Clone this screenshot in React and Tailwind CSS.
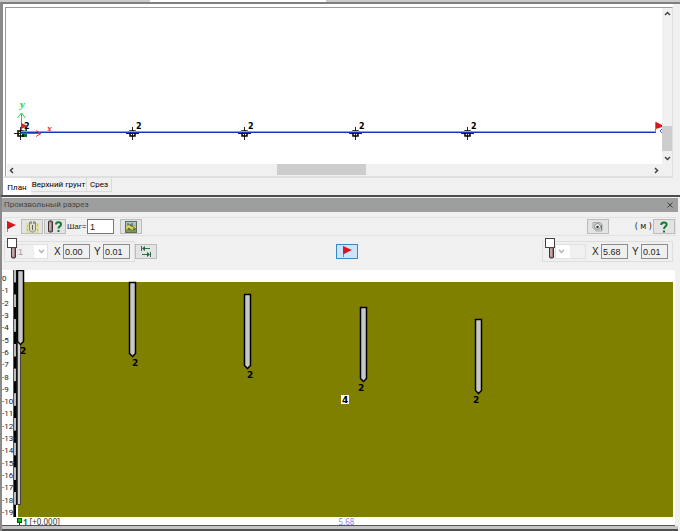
import React from 'react';

const NODES = [125, 237, 348, 460];

const PILES = [
  { x: 10, top: 0, labelX: 13 },
  { x: 122, top: 12, labelX: 125 },
  { x: 237, top: 24, labelX: 240 },
  { x: 353, top: 37, labelX: 351 },
  { x: 468, top: 49, labelX: 466 },
];

const DEPTHS = Array.from({ length: 20 }, (_, i) => i);

function Flag() {
  return (
    <svg width="10" height="11" viewBox="0 0 10 11" aria-hidden="true">
      <path d="M1.5 0v11" stroke="#8f8585" fill="none" />
      <path d="M1 0L10 4L1 8z" fill="#e0141c" />
      <path d="M2 6L9 4L2 8z" fill="#a8262b" />
    </svg>
  );
}

function PileIcon({ question }) {
  return (
    <svg
      width={question ? 15 : 6}
      height="13"
      viewBox={question ? '0 0 15 13' : '0 0 6 13'}
      aria-hidden="true"
    >
      <rect x="0.5" y="1" width="4" height="11" rx="1" fill="#9a7878" stroke="#403030" />
      <path d="M2 2.5v8" stroke="#e8d8d8" />
      {question && (
        <path
          d="M8 4.5C8 1.5 13 1.5 13 4.5C13 6.5 10.5 6.3 10.5 8.5M10.5 10v2"
          fill="none"
          stroke="#137a35"
          strokeWidth="2"
        />
      )}
    </svg>
  );
}

function PitIcon() {
  return (
    <svg width="13" height="12" viewBox="0 0 13 12" aria-hidden="true">
      <path d="M0 2h13v10H0z" fill="#dfdcae" />
      <path d="M3.5 1v8l2 2h2l2-2V1" fill="#dcdcd4" stroke="#85866b" />
      <path d="M5 0v3M8 0v3M6.5 4v5" stroke="#5d6158" />
      <path d="M1 5h1M11 4h1M1 9h1M11 9h1" stroke="#a59d63" />
    </svg>
  );
}

function MapIcon() {
  return (
    <svg width="12" height="12" viewBox="0 0 12 12" aria-hidden="true">
      <rect width="12" height="12" fill="#5c7050" />
      <path d="M1 1h10v3L8 5L5 3L1 5z" fill="#a8c6cf" />
      <path d="M1 5l3-1l3 2l4-2v3L7 9L4 7L1 9z" fill="#d8d052" />
      <path d="M1 9l3-1l3 2l4-2v3H1z" fill="#81965b" />
      <path d="M3 2v2M7 2v3M4 7v2M9 6v3" stroke="#3d5138" />
    </svg>
  );
}

function CameraIcon() {
  return (
    <svg width="12" height="11" viewBox="0 0 12 11" aria-hidden="true">
      <path d="M1 1.5h7l2 1.5v7H4L1 7z" fill="#d5d9d7" stroke="#a5acaa" />
      <circle cx="5.5" cy="5.5" r="3" fill="#eef1ef" stroke="#828a87" />
      <circle cx="5.5" cy="6" r="1.2" fill="#252d2a" />
      <path d="M9.5 4v5" stroke="#6f7774" />
    </svg>
  );
}

function ArrowsIcon() {
  return (
    <svg width="12" height="11" viewBox="0 0 12 11" aria-hidden="true">
      <g fill="none" stroke="#2e7243">
        <path d="M1.5 0v5M3 2.5h7M10.5 6v5M9 8.5H2" />
      </g>
      <path d="M2 2.5l3-2.5v5zM10 8.5l-3-2.5v5z" fill="#1d6a35" />
    </svg>
  );
}

function HelpIcon() {
  return (
    <svg width="8" height="12" viewBox="0 0 8 12" aria-hidden="true">
      <path
        d="M1.2 4C1.2 0.6 6.6 0.6 6.6 3.5C6.6 5.6 4 5.4 4 8M4 9.5v2"
        fill="none"
        stroke="#137a35"
        strokeWidth="2"
      />
    </svg>
  );
}

function Chevron({ d, color = '#444' }) {
  return (
    <svg width="7" height="7" viewBox="0 0 7 7" aria-hidden="true">
      <path d={d} fill="none" stroke={color} strokeWidth="1.5" />
    </svg>
  );
}

const UP = 'M1 5L3.5 2.5L6 5';
const DOWN = 'M1 2L3.5 4.5L6 2';
const LEFT = 'M5 1L2.5 3.5L5 6';
const RIGHT = 'M2 1L4.5 3.5L2 6';

function ToolButton({ label, active, children }) {
  return (
    <button
      type="button"
      aria-label={label}
      className={`flex h-[15px] w-[22px] shrink-0 items-center justify-center border ${
        active ? 'border-[#3d87c5] bg-[#cce4f7]' : 'border-[#bcbcbc] bg-[#e3e3e3]'
      }`}
    >
      {children}
    </button>
  );
}

function Coord({ name, value, id }) {
  return (
    <div className="flex items-center gap-[2px]">
      <label htmlFor={id} className="w-[7px] text-[10px] leading-3">
        {name}
      </label>
      <input
        id={id}
        defaultValue={value}
        className="h-[15px] w-[27px] border border-[#8c8c8c] bg-[#f0f0f0] px-px text-[9px] leading-3 outline-none"
      />
    </div>
  );
}

function PointGroup({ side, pile, x, y }) {
  return (
    <div className="relative flex h-[21px] w-[131px] items-center justify-end gap-[4px] border border-[#dedede] pr-[4px]">
      <input
        type="checkbox"
        aria-label={`${side} point`}
        className="absolute -top-1 left-[2px] size-[10px] appearance-none border border-[#444] bg-white"
      />
      <div className="mr-[2px] flex items-end">
        <PileIcon />
        <div className="relative flex h-[15px] w-[31px] items-center border border-[#e0e0e0] bg-[#fcfcfc]">
          <select
            disabled
            aria-label={`${side} pile`}
            defaultValue={pile}
            className={`h-full w-full appearance-none text-[9px] leading-3 text-[#999] ${
              pile
                ? 'bg-linear-to-r from-[#f0f0f0] from-55% to-white to-55%'
                : 'bg-linear-to-r from-white from-50% to-[#f0f0f0] to-50%'
            }`}
          >
            <option>{pile}</option>
          </select>
          <span className={`pointer-events-none absolute ${pile ? 'right-[2px]' : 'left-[2px]'}`}>
            <Chevron d={DOWN} color="#b0b0b0" />
          </span>
        </div>
      </div>
      <Coord name="X" value={x} id={`${side}-x`} />
      <Coord name="Y" value={y} id={`${side}-y`} />
    </div>
  );
}

function PlanNode({ x }) {
  return (
    <g>
      <path d={`M${x - 6} 125.5h13M${x + 0.5} 119v13`} stroke="#222" />
      <rect x={x - 2} y="123" width="5" height="5" fill="none" stroke="#000" strokeWidth="1.5" />
      <text x={x + 4} y="121" className="text-[8px] font-bold">
        2
      </text>
    </g>
  );
}

function PlanView() {
  return (
    <svg className="block h-[156px] w-full min-w-0 flex-1 bg-white font-['DejaVu_Sans',sans-serif]">
      <svg x="100%" overflow="visible">
        <path d="M-6.5 114v10" stroke="#8f8585" />
        <path d="M-6 114L0 117V119L-6 121z" fill="#d8141c" />
        <path d="M0 121L-2 123L0 125" fill="none" stroke="#4a50f0" />
      </svg>
      <svg width="100%" height="156">
        <path d="M14.5 124V106M10.5 110L14.5 105L18.5 110" fill="none" stroke="#21cf45" />
        <text x="13" y="100" fill="#21cf45" className="font-['Liberation_Serif',serif] text-[11px] font-bold italic">
          y
        </text>
        <text x="40" y="124" fill="#f0202a" className="font-['Liberation_Serif',serif] text-[10px] font-bold italic">
          x
        </text>
        <path d="M15 125l5-5v9h-5z" fill="#087022" />
        <PlanNode x={13} />
        <path d="M14 115L21 118L14 121z" fill="#c92a2a" />
        {NODES.map((x) => (
          <PlanNode key={x} x={x} />
        ))}
      </svg>
      <svg x="-6" width="100%" height="156">
        <line x1="20" x2="100%" y1="123.5" y2="123.5" stroke="#8aa2e6" />
        <line x1="20" x2="100%" y1="124.5" y2="124.5" stroke="#1238b8" />
      </svg>
      <path d="M14 125.5h20M29 122.5L34 125.5L29 128.5" fill="none" stroke="#f03040" />
    </svg>
  );
}

function PlanPanel() {
  return (
    <section className="border-t-2 border-l-3 border-t-[#7f7f7f] border-l-[#8a8a8a] bg-[#f0f0f0] pr-[7px]">
      <div className="border-t-2 border-l-2 border-white bg-white pt-px">
        <div className="border-t border-r border-b border-l border-[#9a9a9a] border-r-[#e0e0e0] border-b-[#e0e0e0] pl-px">
          <div className="flex">
            <PlanView />
            <div className="flex w-[10px] flex-col items-center bg-[#f0f0f0] py-[2px]">
              <Chevron d={UP} />
              <div className="mt-auto h-[25px] w-full bg-[#cdcdcd]" />
              <div className="pt-1">
                <Chevron d={DOWN} />
              </div>
            </div>
          </div>
          <div className="flex h-[12px] items-center bg-[#f0f0f0] pr-[12px] pl-px">
            <Chevron d={LEFT} />
            <div className="flex h-full flex-1">
              <div className="w-[41%]" />
              <div className="h-[11px] w-[14%] bg-[#cdcdcd]" />
            </div>
            <Chevron d={RIGHT} />
          </div>
        </div>
      </div>
      <div className="flex h-[18px] items-start border-t border-[#dedede] border-l-white font-['Roboto',sans-serif] text-[8px] leading-3 text-black">
        <button type="button" className="h-[17px] w-[28px] bg-white pt-[2px] leading-3">
          План
        </button>
        <button type="button" className="h-[14px] w-[56px] border-r border-b border-[#dadada] leading-3 whitespace-nowrap">
          Верхний грунт
        </button>
        <button type="button" className="h-[14px] w-[25px] border-r border-b border-[#dadada] leading-3">
          Срез
        </button>
      </div>
    </section>
  );
}

function Toolbar() {
  return (
    <div className="h-[58px] bg-[#f0f0f0] px-[2px] pt-[5px] font-['Liberation_Sans',sans-serif] text-[#222]">
      <div className="flex h-[19px] items-center border border-[#e2e2e2] pl-px">
        <div className="w-[15px]">
          <Flag />
        </div>
        <div className="flex gap-px">
          <ToolButton label="Pit">
            <PitIcon />
          </ToolButton>
          <ToolButton label="Pile info">
            <PileIcon question />
          </ToolButton>
        </div>
        <label htmlFor="step" className="w-[21px] pl-px text-[8px] leading-3">
          Шаг=
        </label>
        <input
          id="step"
          defaultValue="1"
          className="h-[15px] w-[27px] border border-[#777] bg-white px-[2px] text-[9px] leading-3 outline-none"
        />
        <div className="pl-[6px]">
          <ToolButton label="Map">
            <MapIcon />
          </ToolButton>
        </div>
        <div className="ml-auto flex items-center">
          <ToolButton label="Camera">
            <CameraIcon />
          </ToolButton>
          <span className="w-[44px] pr-px text-right font-['DejaVu_Sans',sans-serif] text-[8px] leading-3">
            ( м )
          </span>
          <ToolButton label="Help">
            <HelpIcon />
          </ToolButton>
        </div>
      </div>
      <div className="mt-[5px] flex items-center">
        <div className="flex flex-1 items-center">
          <PointGroup side="left" pile="1" x="0.00" y="0.01" />
          <ToolButton label="Swap ends">
            <ArrowsIcon />
          </ToolButton>
        </div>
        <div className="pl-4">
          <ToolButton label="Flag" active>
            <Flag />
          </ToolButton>
        </div>
        <div className="flex flex-1 justify-end pr-[3px]">
          <PointGroup side="right" pile="" x="5.68" y="0.01" />
        </div>
      </div>
    </div>
  );
}

function SectionView() {
  return (
    <div className="flex bg-white pr-[2px]">
      <div className="relative z-10 flex h-[247px] w-[11px] shrink-0 flex-col justify-between pt-[4px] font-['Roboto',sans-serif] text-[8px] text-[#222]">
        {DEPTHS.map((d) => (
          <span key={d} className="h-[9px] leading-[9px] whitespace-nowrap">
            {d === 0 ? '0' : `-${d}`}
          </span>
        ))}
      </div>
      <svg className="block h-[247px] min-w-0 flex-1 font-['DejaVu_Sans',sans-serif]">
        <rect x="5" y="12" width="100%" height="235" fill="#808000" />
        {DEPTHS.map((d) => (
          <rect
            key={d}
            x="1"
            y={d * 12.35}
            width="2"
            height="12.35"
            fill={d % 2 ? '#000' : '#bdbdbd'}
          />
        ))}
        <path d="M0.5 0v247" stroke="#555" />
        <path d="M3.5 0v235" stroke="#111" />
        <rect x="4.5" y="70" width="3" height="164.5" fill="#d0d0d0" stroke="#444" />
        {PILES.map(({ x, top, labelX }) => (
          <g key={x}>
            <path
              d={`M${x - 5.5} ${top + 0.5}h6v71l-3 3l-3-3z`}
              fill="#c8c8c8"
              stroke="#000"
              strokeWidth="1.5"
            />
            <text x={labelX - 6} y={top + 84} className="text-[9px] font-bold">
              2
            </text>
          </g>
        ))}
        <rect x="328" y="125" width="8" height="9" fill="#fff" />
        <text x="329" y="133" className="text-[9px] font-bold">
          4
        </text>
      </svg>
    </div>
  );
}

function SectionPanel() {
  return (
    <section className="border-t-2 border-l-2 border-t-[#4d4d4d] border-l-[#8a8a8a] bg-[#f0f0f0] pr-[2px]">
      <header className="mt-px flex h-[14px] items-center justify-between bg-[#9d9f9f] pr-[5px] pl-[2px] text-[#444]">
        <h2 className="font-['Roboto',sans-serif] text-[8px] leading-3">Произвольный разрез</h2>
        <button type="button" aria-label="Close" className="flex">
          <svg width="6" height="6" viewBox="0 0 6 6" aria-hidden="true">
            <path d="M0.5 0.5l5 5M5.5 0.5l-5 5" stroke="#444" />
          </svg>
        </button>
      </header>
      <Toolbar />
      <div className="pr-[3px]">
        <SectionView />
        <footer className="relative flex h-[9px] items-center border-b border-[#555] bg-white pl-[15px] font-['Noto_Sans',sans-serif] text-[8px] leading-[7px] text-[#333]">
          <svg width="6" height="8" viewBox="0 0 6 8" aria-hidden="true">
            <rect x="0.5" y="1.5" width="4" height="4" fill="#00c020" stroke="#055010" />
            <path d="M2.5 6v2" stroke="#055010" />
          </svg>
          <span className="font-bold text-[#0a7a10]">1</span>
          <span className="pl-[2px]">[+0.000]</span>
          <span className="absolute left-1/2 text-[#8a84ee]">5.68</span>
        </footer>
      </div>
      <div className="h-[5px] border-b-2 border-[#4d4d4d] bg-[#c4c4c4]" />
    </section>
  );
}

export default function App() {
  return (
    <main className="w-full bg-[#f0f0f0] text-black">
      <div className="flex h-[2px] bg-[#cbcbcb]">
        <div className="ml-[22%] w-[26%] bg-white" />
      </div>
      <PlanPanel />
      <SectionPanel />
    </main>
  );
}
